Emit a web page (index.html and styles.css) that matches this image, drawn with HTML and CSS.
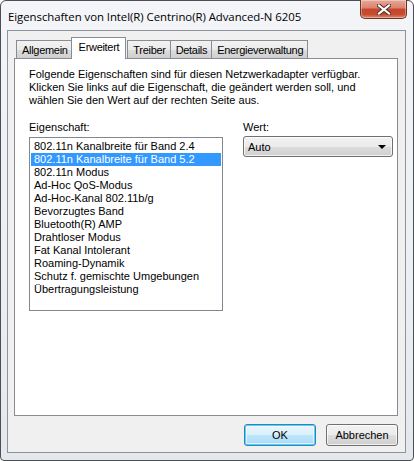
FILE: index.html
```html
<!DOCTYPE html>
<html lang="de">
<head>
    <meta charset="UTF-8">
    <title>Eigenschaften von Intel(R) Centrino(R) Advanced-N 6205</title>
    <link rel="stylesheet" href="styles.css">
</head>
<body>
    <div class="window">
        <div class="titlebar">
            <span class="title">Eigenschaften von Intel(R) Centrino(R) Advanced-N 6205</span>
            <button class="close-btn" aria-label="Schließen">
                <svg width="14" height="11" viewBox="0 0 14 11">
                    <path d="M2 1.5 L12 9.5 M12 1.5 L2 9.5" stroke="#4a2a24" stroke-width="4" stroke-linecap="square"/>
                    <path d="M2 1.5 L12 9.5 M12 1.5 L2 9.5" stroke="#ffffff" stroke-width="2.2" stroke-linecap="square"/>
                </svg>
            </button>
        </div>

        <div class="client">
            <div class="tabs">
                <div class="tab">Allgemein</div>
                <div class="tab active">Erweitert</div>
                <div class="tab">Treiber</div>
                <div class="tab">Details</div>
                <div class="tab">Energieverwaltung</div>
            </div>

            <div class="panel">
                <p class="intro">
                    Folgende Eigenschaften sind für diesen Netzwerkadapter verfügbar.<br>
                    Klicken Sie links auf die Eigenschaft, die geändert werden soll, und<br>
                    wählen Sie den Wert auf der rechten Seite aus.
                </p>

                <div class="fields">
                    <div class="field-left">
                        <label class="label">Eigenschaft:</label>
                        <ul class="listbox">
                            <li>802.11n Kanalbreite für Band 2.4</li>
                            <li class="selected">802.11n Kanalbreite für Band 5.2</li>
                            <li>802.11n Modus</li>
                            <li>Ad-Hoc QoS-Modus</li>
                            <li>Ad-Hoc-Kanal 802.11b/g</li>
                            <li>Bevorzugtes Band</li>
                            <li>Bluetooth(R) AMP</li>
                            <li>Drahtloser Modus</li>
                            <li>Fat Kanal Intolerant</li>
                            <li>Roaming-Dynamik</li>
                            <li>Schutz f. gemischte Umgebungen</li>
                            <li>Übertragungsleistung</li>
                        </ul>
                    </div>
                    <div class="field-right">
                        <label class="label">Wert:</label>
                        <div class="combo">
                            <span>Auto</span>
                            <span class="arrow"></span>
                        </div>
                    </div>
                </div>
            </div>

            <div class="buttons">
                <button class="btn btn-default">OK</button>
                <button class="btn">Abbrechen</button>
            </div>
        </div>
    </div>
</body>
</html>
```

FILE: styles.css
```css
* {
    margin: 0;
    padding: 0;
    box-sizing: border-box;
}

body {
    width: 414px;
    height: 461px;
    background: #ffffff;
    font-family: "Liberation Sans", Arial, sans-serif;
    font-size: 11px;
    color: #000;
    overflow: hidden;
}

.window {
    width: 414px;
    height: 461px;
    border: 1px solid #4c4f55;
    border-radius: 6px 6px 4px 4px;
    background: linear-gradient(180deg, #f3f5f8 0%, #eceff3 60%, #e4e7ec 100%);
    padding: 0 7px 7px 6px;
    display: flex;
    flex-direction: column;
}

/* title bar */
.titlebar {
    height: 29px;
    display: flex;
    align-items: flex-start;
    justify-content: space-between;
}

.title {
    font-family: "Open Sans", "Liberation Sans", sans-serif;
    font-size: 11.4px;
    margin-top: 8px;
    margin-left: 1px;
    color: #000;
    letter-spacing: -0.05px;
}

.close-btn {
    width: 47px;
    height: 19px;
    margin-top: -1px;
    margin-right: -1px;
    border: 1px solid #6d3226;
    border-top: none;
    border-radius: 0 0 5px 5px;
    background: linear-gradient(180deg, #e9a899 0%, #d9826d 45%, #c4452b 50%, #c84b30 80%, #de8a6f 100%);
    box-shadow: inset 0 0 0 1px rgba(255,255,255,0.35);
    display: flex;
    align-items: center;
    justify-content: center;
}

/* dialog client area */
.client {
    flex: 1;
    background: #f0f0f0;
    border: 1px solid #8e939b;
    padding: 6px 7px 0 6px;
    display: flex;
    flex-direction: column;
}

.tabs {
    display: flex;
    height: 21px;
    padding-left: 2px;
    align-items: flex-end;
    position: relative;
    z-index: 1;
}

.tab {
    height: 18px;
    padding: 3px 4px 0 5px;
    border: 1px solid #898c95;
    border-bottom: none;
    margin-right: -1px;
    background: linear-gradient(180deg, #f2f2f2 0%, #ebebeb 50%, #dddddd 51%, #cfcfcf 100%);
    white-space: nowrap;
    letter-spacing: -0.3px;
}

.tab.active {
    height: 22px;
    margin: 0 1px -1px -1px;
    padding: 3px 6px 0 7px;
    background: #ffffff;
}

.panel {
    height: 358px;
    background: #ffffff;
    border: 1px solid #898c95;
    padding: 9px 0 0 14px;
}

.intro {
    line-height: 13px;
}

.fields {
    display: flex;
    margin-top: 14px;
}

.field-left {
    width: 194px;
    flex-shrink: 0;
}

.field-right {
    margin-left: 20px;
    width: 150px;
    flex-shrink: 0;
}

.label {
    display: block;
    height: 16px;
}

.listbox {
    list-style: none;
    height: 174px;
    border: 1px solid #828790;
    padding: 2px 1px;
}

.listbox li {
    height: 13px;
    line-height: 13px;
    padding-left: 3px;
    white-space: nowrap;
}

.listbox li.selected {
    background: #3399ff;
    color: #ffffff;
}

.combo {
    height: 21px;
    margin-top: -1px;
    border: 1px solid #707070;
    border-radius: 3px;
    background: linear-gradient(180deg, #f2f2f2 0%, #ebebeb 50%, #dddddd 51%, #cfcfcf 100%);
    box-shadow: inset 0 0 0 1px rgba(255,255,255,0.7);
    display: flex;
    align-items: center;
    justify-content: space-between;
    padding: 0 6px 0 4px;
}

.arrow {
    width: 0;
    height: 0;
    border-left: 4px solid transparent;
    border-right: 4px solid transparent;
    border-top: 4px solid #000;
}

/* dialog buttons */
.buttons {
    display: flex;
    justify-content: flex-end;
    gap: 10px;
    margin-top: 8px;
}

.btn {
    width: 72px;
    height: 22px;
    font-family: "Liberation Sans", Arial, sans-serif;
    font-size: 11px;
    color: #000;
    border: 1px solid #707070;
    border-radius: 3px;
    background: linear-gradient(180deg, #f2f2f2 0%, #ebebeb 50%, #dddddd 51%, #cfcfcf 100%);
    box-shadow: inset 0 0 0 1px rgba(255,255,255,0.7);
}

.btn-default {
    border-color: #3c7fb1;
    background: linear-gradient(180deg, #eaf6fd 0%, #d9f0fc 50%, #bee6fd 51%, #a7d9f5 100%);
    box-shadow: inset 0 0 0 1px #48d4fd, inset 0 0 0 2px rgba(255,255,255,0.6);
}
```
